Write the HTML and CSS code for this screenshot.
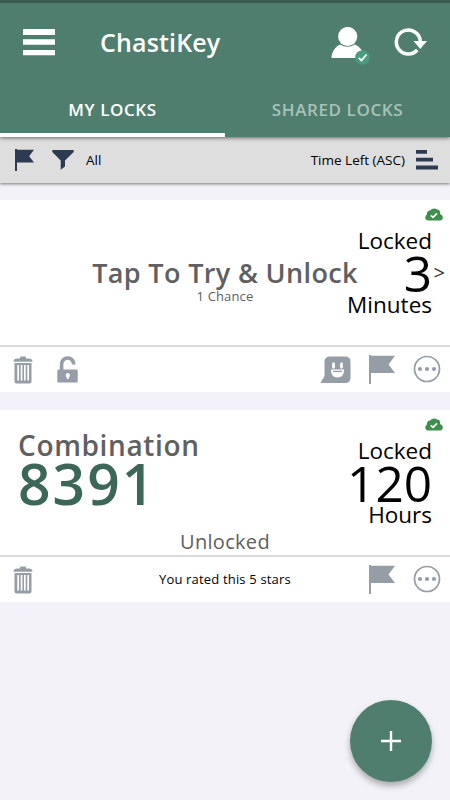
FILE: index.html
```html
<!DOCTYPE html>
<html lang="en">
<head>
<meta charset="utf-8">
<title>ChastiKey</title>
<link rel="stylesheet" href="styles.css">
</head>
<body>
<svg width="0" height="0" class="defs">
  <symbol id="trash" viewBox="0 0 20 28">
    <path d="M7 2V1.600Q7 .5 8.200 .5h3.600Q13 .5 13 1.600V2.500h3.500Q19.500 3 19.500 5.800H.5Q.5 3 3.500 2.500H7z"/>
    <path fill-rule="evenodd" d="M1.500 7h17v18.500q0 2-2 2h-13q-2 0-2-2zM4.300 9v15.500h1.700V9zM7.700 9v15.500h1.700V9zM11 9v15.500h1.700V9zM14.300 9v15.500H16V9z"/>
  </symbol>
  <symbol id="flag" viewBox="0 0 26 29">
    <path d="M0 0h2v.8h24l-6.500 8.700L26 18H2v11H0z"/>
  </symbol>
  <symbol id="more" viewBox="0 0 28 28">
    <circle cx="14" cy="14" r="12.500" fill="none" stroke="currentColor" stroke-width="1.700"/>
    <circle cx="7" cy="14" r="2.100"/><circle cx="14" cy="14" r="2.100"/><circle cx="21" cy="14" r="2.100"/>
  </symbol>
  <symbol id="cloud" viewBox="0 0 18 13">
    <path d="M4 12.500C1.500 12.500 0 11 .3 9.200.5 7.800 1.200 7 2 6.700 1.400 4.500 3 2.500 5.200 2.600 6.500.4 10-.3 12 1.500c1.500-.2 3 1 3.200 3 0 .8 0 1.200-.2 1.700 1.600.2 2.800 1.600 2.800 3.200 0 1.700-1 3.100-3 3.100z"/>
    <path d="M5.800 7.300l2.200 2 4-4" fill="none" stroke="#fff" stroke-width="1.700"/>
  </symbol>
</svg>
<header class="header">
  <div class="bar">
    <svg class="menu" viewBox="0 0 32 28"><path d="M0 1h32v6H0zM0 11.300h32v5.500H0zM0 22h32v5.300H0z"/></svg>
    <h1 class="title">ChastiKey</h1>
    <svg class="user" viewBox="0 0 40 40">
      <circle cx="16.700" cy="9.500" r="9.600"/>
      <path d="M.5 31C.8 24 4.500 19.500 9 17.400q7.500 4.600 15 0C29 19.500 32.500 24 32.800 31z"/>
      <circle cx="31.500" cy="30.500" r="7.300" fill="#4b9b80"/>
      <path d="M27.800 30.800l2.700 2.700 5-6" fill="none" stroke="#fff" stroke-width="1.800"/>
    </svg>
    <svg class="refresh" viewBox="0 0 32 28">
      <path d="M22.300 22A12 12 0 1 1 25.300 13" fill="none" stroke="#fff" stroke-width="3.500"/>
      <path d="M18.500 13H32l-6.700 8z"/>
    </svg>
  </div>
  <nav class="tabs"><div class="tab active"><span>MY LOCKS</span></div><div class="tab"><span>SHARED LOCKS</span></div></nav>
</header>
<section class="filter">
  <svg class="fflag" viewBox="0 0 20 23"><path d="M0 0h2v.7h17l-4.800 6.500 4.800 6.300H2V22H0z"/></svg>
  <svg class="funnel" viewBox="0 0 22 20"><path d="M.3 0h21.400v2L13 10.500v6L8.700 19.700V10.500L.3 2z"/></svg>
  <span class="all">All</span>
  <span class="sort">Time Left (ASC)</span>
  <svg class="bars" viewBox="0 0 22 20"><path d="M0 0h11v3.800H0zM0 7.800h17v3.800H0zM0 15.500h22v3.900H0z"/></svg>
</section>
<main>
  <article class="card">
    <div class="body">
      <div class="try"><div class="tap">Tap To Try &amp; Unlock</div><div class="chance">1 Chance</div></div>
      <div class="time"><svg class="cloud"><use href="#cloud"/></svg>
        <div class="unit">Locked</div><div class="num">3</div><div class="unit">Minutes</div></div>
      <span class="chev">&gt;</span>
    </div>
    <div class="actions">
      <svg class="trash"><use href="#trash"/></svg>
      <svg class="lock" viewBox="0 0 21 27"><path d="M4.600 14V8.500C4.600-.2 16.700-.2 16.700 8.500" fill="none" stroke="currentColor" stroke-width="3.600"/><path fill-rule="evenodd" d="M1.500 13.500h18q1.200 0 1.200 1.200v10.600q0 1.200-1.200 1.200h-18Q.3 26.500.3 25.300V14.700q0-1.200 1.200-1.200zM10.800 17a2.300 2.300 0 0 0-1 4.300V23h2v-1.700a2.300 2.300 0 0 0-1-4.300z"/></svg>
      <svg class="chat" viewBox="0 0 31 28"><path d="M10 .5h15q5.500 0 5.500 5.500v15.500q0 5.500-5.500 5.500H.5L4.500 20V6Q4.500.5 10 .5z"/><g fill="#fff"><ellipse cx="13.500" cy="9.500" rx="1.500" ry="3.300"/><ellipse cx="21.500" cy="9.500" rx="1.500" ry="3.300"/><path d="M10.800 13.500h13.400q-.3 8-6.700 8t-6.700-8z"/></g><path d="M13 14.800v1.300h9v-1.300z"/></svg>
      <svg class="flag"><use href="#flag"/></svg>
      <svg class="more"><use href="#more"/></svg>
    </div>
  </article>
  <article class="card">
    <div class="body">
      <div class="combo"><div class="label">Combination</div><div class="code">8391</div><div class="state">Unlocked</div></div>
      <div class="time"><svg class="cloud"><use href="#cloud"/></svg>
        <div class="unit">Locked</div><div class="num">120</div><div class="unit">Hours</div></div>
    </div>
    <div class="actions">
      <svg class="trash"><use href="#trash"/></svg>
      <span class="rated">You rated this 5 stars</span>
      <svg class="flag push"><use href="#flag"/></svg>
      <svg class="more"><use href="#more"/></svg>
    </div>
  </article>
</main>
<button class="fab" aria-label="Add"><svg viewBox="0 0 20 20"><path d="M8.800 0h2.400v8.800H20v2.400h-8.800V20H8.800v-8.800H0V8.800h8.800z"/></svg></button>
</body>
</html>
```
FILE: styles.css
```css
* { box-sizing: border-box; }
body { margin: 0; height: 800px; overflow: hidden; background: #f3f2f8; color: #000; font-family: "Open Sans", "Noto Sans", sans-serif; }
svg { display: block; flex: none; fill: currentColor; }
.defs { position: absolute; }
.header { height: 137px; background: #4f7e6f; border-top: 3px solid #3b5d50; color: #fff; position: relative; z-index: 2; box-shadow: 0 1px 4px rgba(0,0,0,.55); }
.bar { height: 83px; display: flex; align-items: flex-start; padding: 24px 23px 0; }
.menu { width: 32px; height: 28px; margin-top: 1px; }
.title { margin: -2px 0 0 45px; width: 231px; font-size: 25px; line-height: 34px; font-weight: 600; letter-spacing: .15px; white-space: nowrap; }
.user { width: 40px; height: 40px; }
.refresh { width: 32px; height: 28px; margin-left: 24px; margin-top: 1px; overflow: visible; }
.tabs { display: flex; height: 51px; }
.tab { flex: 1; text-align: center; font-size: 17px; line-height: 47px; font-weight: 600; color: #a9c2b9; letter-spacing: .6px; }
.active { color: #fff; border-bottom: 4px solid #fff; }
.filter { height: 46px; background: #dedede; display: flex; align-items: flex-start; padding: 12px 12px 0 15px; font-size: 13.5px; line-height: 22px; box-shadow: 0 1px 3px rgba(0,0,0,.5); color: #2d3b52; }
.fflag { width: 20px; height: 23px; }
.funnel { width: 22px; height: 20px; margin: 1px 0 0 17px; }
.all { color: #000; margin-left: 12px; }
.sort { color: #000; margin-left: auto; white-space: nowrap; }
.bars { width: 22px; height: 20px; margin: 1px 0 0 11px; }
main { padding-top: 17px; display: flex; flex-direction: column; gap: 18px; }
.card { height: 192px; background: #fff; }
.body { height: 147px; border-bottom: 2px solid #dadada; position: relative; display: flex; }
.try { width: 450px; flex: none; padding-top: 56px; text-align: center; color: #606060; }
.tap { font-size: 27px; font-weight: 600; line-height: 34px; letter-spacing: .35px; white-space: nowrap; }
.chance { font-size: 13px; line-height: 13px; letter-spacing: .15px; }
.time { position: absolute; right: 18px; top: 0; text-align: right; padding-top: 29px; }
.unit { font-size: 22.5px; line-height: 24px; white-space: nowrap; }
.num { font-size: 49.5px; line-height: 40px; }
.cloud { position: absolute; width: 18px; height: 13px; top: 8px; right: -11px; color: #3e8f4c; }
.chev { position: absolute; right: 5px; top: 61px; font-size: 20px; line-height: 24px; color: #333; }
.actions { height: 45px; display: flex; padding: 0 9px 0 13px; color: #959da6; }
.trash { width: 20px; height: 28px; margin-top: 9px; }
.lock { width: 21px; height: 27px; margin: 9px 0 0 24px; }
.chat { width: 31px; height: 28px; margin: 9px 18px 0 auto; }
.flag { width: 26px; height: 29px; margin-top: 8px; }
.more { width: 28px; height: 28px; margin: 8px 0 0 18px; }
.combo { width: 450px; flex: none; padding-top: 17px; }
.label { padding-left: 18px; color: #606060; font-size: 28px; font-weight: 600; line-height: 36px; letter-spacing: .65px; }
.code { padding-left: 18px; color: #3b6658; font-size: 57px; font-weight: 600; line-height: 40px; letter-spacing: 2px; }
.state { text-align: center; color: #606060; font-size: 20px; line-height: 26px; margin-top: 26px; letter-spacing: .3px; }
.rated { color: #000; margin-left: 126px; width: 140px; font-size: 13px; line-height: 44px; letter-spacing: .17px; white-space: nowrap; }
.push { margin-left: auto; }
.fab { position: absolute; left: 350px; top: 700px; width: 82px; height: 82px; border: 0; border-radius: 50%; padding: 0; background: #4f7e6f; color: #fff; display: flex; align-items: center; justify-content: center; box-shadow: 0 4px 6px rgba(0,0,0,.3); }
.fab svg { width: 20px; height: 20px; }
```
